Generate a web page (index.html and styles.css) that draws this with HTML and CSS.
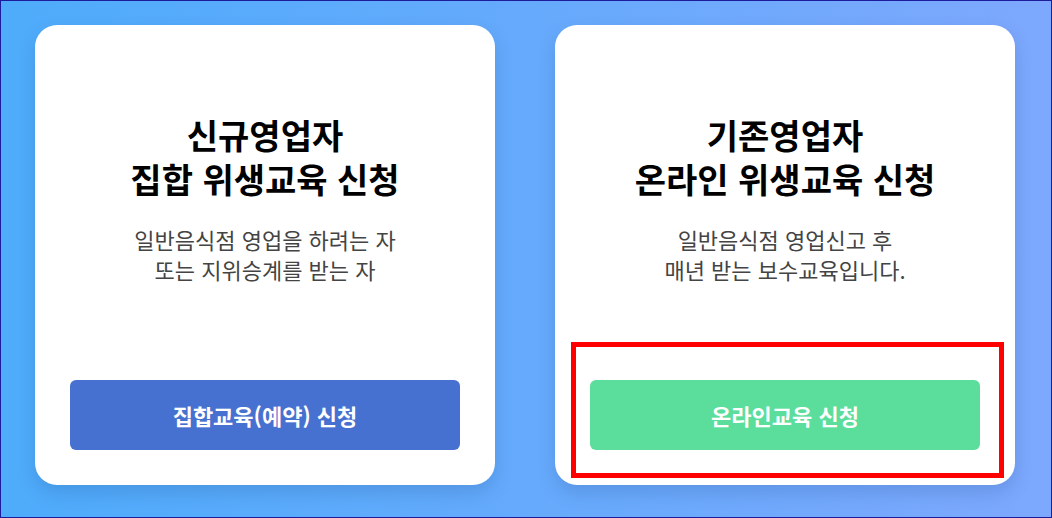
FILE: index.html
```html
<!DOCTYPE html>
<html lang="ko">
<head>
    <meta charset="UTF-8">
    <meta name="viewport" content="width=device-width, initial-scale=1.0">
    <title>위생교육 신청</title>
    <link rel="stylesheet" href="styles.css">
</head>
<body>
    <div class="page">
        <!-- 신규영업자 -->
        <div class="card">
            <h2 class="card-title">신규영업자<br>집합 위생교육 신청</h2>
            <p class="card-desc">일반음식점 영업을 하려는 자<br>또는 지위승계를 받는 자</p>
            <button type="button" class="btn btn-blue">집합교육(예약) 신청</button>
        </div>

        <!-- 기존영업자 -->
        <div class="card">
            <h2 class="card-title">기존영업자<br>온라인 위생교육 신청</h2>
            <p class="card-desc">일반음식점 영업신고 후<br>매년 받는 보수교육입니다.</p>
            <button type="button" class="btn btn-green">온라인교육 신청</button>
            <div class="highlight"></div>
        </div>
    </div>
</body>
</html>
```

FILE: styles.css
```css
/* 기본 */
html, body {
    margin: 0;
    padding: 0;
}

body {
    font-family: "Noto Sans CJK KR", "Noto Sans", sans-serif;
}

.page {
    box-sizing: border-box;
    height: 100vh;
    border: 1px solid #1c1c9c;
    background: linear-gradient(to right, #4eacfb, #7da8fd);
    display: flex;
    justify-content: center;
    align-items: flex-start;
    gap: 60px;
    padding: 24px 2px 0 0;
}

/* 카드 */
.card {
    position: relative;
    box-sizing: border-box;
    width: 460px;
    height: 460px;
    background-color: #fff;
    border-radius: 22px;
    box-shadow: 0 8px 18px rgba(20, 60, 120, 0.18);
    padding: 88px 20px 35px;
    display: flex;
    flex-direction: column;
    align-items: center;
    text-align: center;
}

.card-title {
    margin: 0;
    font-size: 34px;
    line-height: 44px;
    font-weight: 700;
    color: #000;
}

.card-desc {
    margin: 23px 0 0;
    font-size: 22px;
    line-height: 30px;
    color: #444;
}

/* 버튼 */
.btn {
    margin-top: auto;
    width: 390px;
    height: 70px;
    border: none;
    border-radius: 6px;
    font-family: inherit;
    font-size: 22px;
    font-weight: 700;
    color: #fff;
    cursor: pointer;
}

.btn-blue {
    background-color: #4771d0;
}

.btn-green {
    background-color: #5bdd9c;
}

/* 강조 표시 */
.highlight {
    position: absolute;
    left: 16px;
    top: 317px;
    width: 433px;
    height: 136px;
    box-sizing: border-box;
    border: 5px solid #f00;
    pointer-events: none;
}
```
